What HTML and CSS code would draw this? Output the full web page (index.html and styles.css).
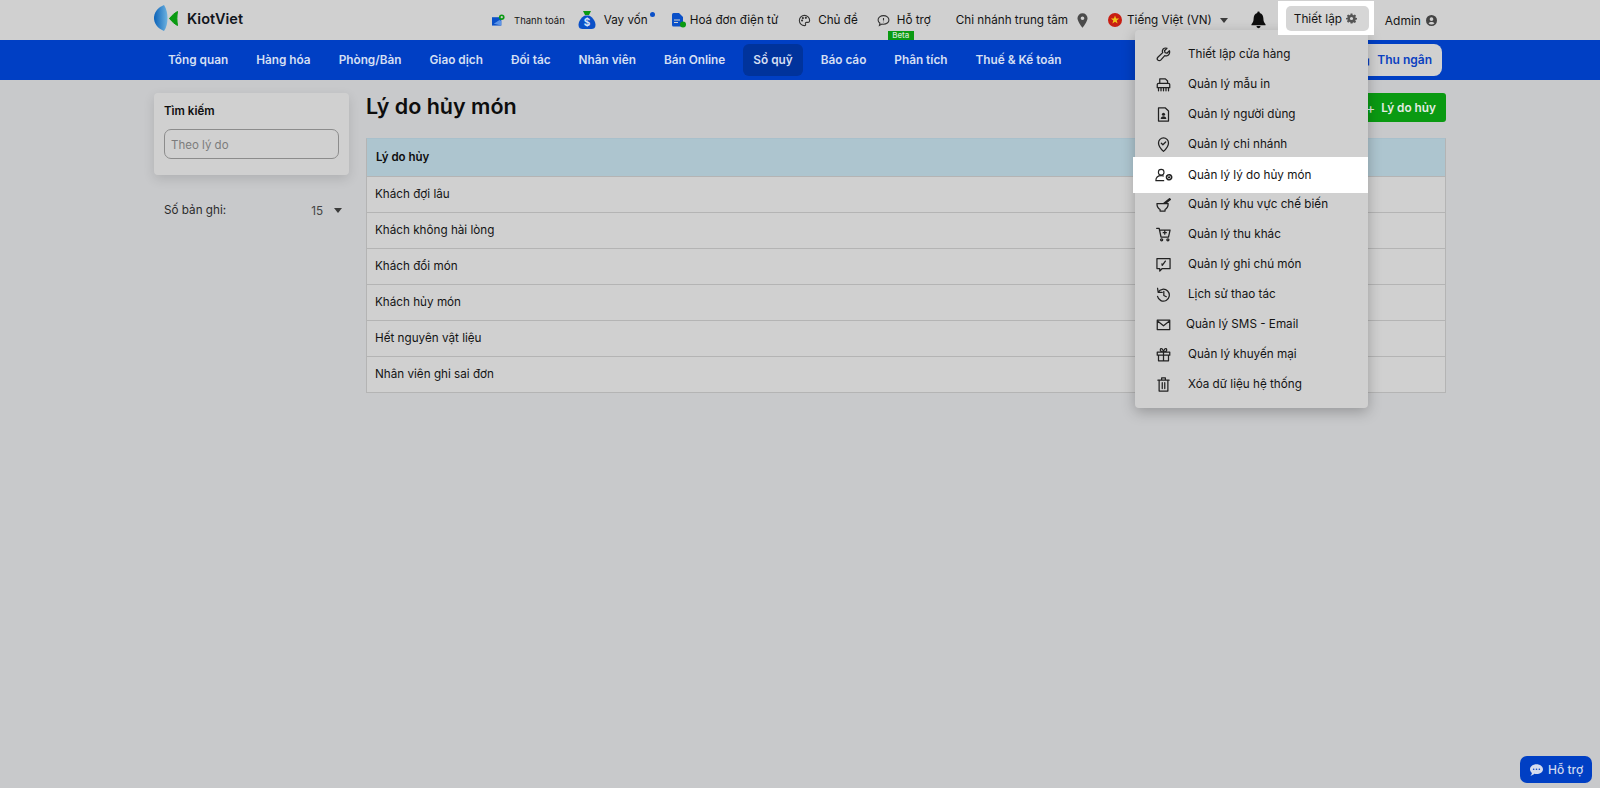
FILE: index.html
```html
<!DOCTYPE html>
<html lang="vi">
<head>
<meta charset="utf-8">
<title>Lý do hủy món</title>
<link rel="stylesheet" href="styles.css">
</head>
<body>
<header class="topbar">
  <div class="logo">
    <svg class="logo-mark" viewBox="0 0 26 28"><defs><linearGradient id="lg" x1="0" x2="1" y1="0" y2="0"><stop offset="0" stop-color="#0b62b8"/><stop offset="1" stop-color="#6db2e0"/></linearGradient></defs><path d="M10 1C3 4 0 9 0 14s3 10 10 13c2.500-3.500 3.500-8.500 3.500-13S12.500 4.500 10 1z" fill="url(#lg)"/><path d="M23.500 7.500c-3 1.500-5.500 4-8 7 2.500 3 5 5.500 8 7-.8-4.500-.8-9.500 0-14z" fill="#0a9a12" stroke="#0a9a12" stroke-linejoin="round"/></svg>
    <span class="logo-text">KiotViet</span>
  </div>
  <div class="top-items">
    <a class="top-item small">
      <svg class="ic-pay" viewBox="0 0 14 12"><path d="M0 3h10v9H0z" fill="#0a50c8"/><path d="M2 10l6-4 2 1v5z" fill="#5d94e6"/><circle cx="10.500" cy="3" r="3" fill="#0a9a12"/><circle cx="10.500" cy="3" r="1.200" fill="#d0d0d0"/></svg>
      <span>Thanh toán</span>
    </a>
    <a class="top-item m-bag">
      <svg class="ic-bag" viewBox="0 0 18 18"><path d="M5 0h8l-2 4H7z" fill="#0a9a12"/><path d="M7 4.500h4c4 2 6.500 6 6.500 9.500 0 3-2 4-4 4h-9c-2 0-4-1-4-4 0-3.500 2.500-7.500 6.500-9.500z" fill="#0a50c8"/><text x="9" y="14.500" class="bag-sign">$</text></svg>
      <span>Vay vốn</span><i class="dot"></i>
    </a>
    <a class="top-item m-inv">
      <svg class="ic-inv" viewBox="0 0 14 15"><path d="M0 1.500Q0 0 1.500 0H7l4 4v9.500H1.500Q0 13.500 0 12z" fill="#0a50c8"/><path d="M2 7h6M2 9.500h4" stroke="#d0d0d0" stroke-width="1"/><circle cx="11" cy="11.500" r="3" fill="#0a9a12"/></svg>
      <span>Hoá đơn điện tử</span>
    </a>
    <a class="top-item m-theme">
      <svg class="ic" viewBox="0 0 24 24"><path d="M12 2.500a9.500 9.500 0 1 0 0 19c2 0 2.500-1.500 1.800-3-.7-1.600.3-3 2-3h3c1.700 0 2.700-1.300 2.700-3.500 0-5.500-4.500-9.500-9.500-9.500z"/><circle cx="7.500" cy="12" r="1"/><circle cx="9" cy="7.500" r="1"/><circle cx="14.500" cy="7" r="1"/></svg>
      <span>Chủ đề</span>
    </a>
    <a class="top-item m-help">
      <svg class="ic" viewBox="0 0 24 24"><path d="M12 3c5.500 0 10 3.500 10 8s-4.500 8-10 8c-1 0-2 0-3-.4L4.500 21l1-4C3.300 15.500 2 13.400 2 11c0-4.500 4.500-8 10-8z"/><path d="M12 7.500v4.500M12 14.500v.5"/></svg>
      <span>Hỗ trợ</span>
      <b class="beta">Beta</b>
    </a>
    <a class="top-item m-branch">
      <span>Chi nhánh trung tâm</span>
      <svg class="ic-pin" viewBox="0 0 12 16"><path fill-rule="evenodd" d="M6 0a5.500 5.500 0 0 1 5.500 5.500C11.500 9 6 16 6 16S.5 9 .5 5.500A5.500 5.500 0 0 1 6 0zm0 3.500a2 2 0 1 0 0 4 2 2 0 0 0 0-4z" fill="#4a4a4a"/></svg>
    </a>
    <a class="top-item m-lang">
      <svg class="ic-flag" viewBox="0 0 14 14"><circle cx="7" cy="7" r="7" fill="#c81e12"/><path d="M7 2.500l1.100 3h3.100l-2.500 1.900.9 3.100L7 8.700l-2.600 1.800.9-3.100-2.500-1.900h3.100z" fill="#f0c419"/></svg>
      <span>Tiếng Việt (VN)</span>
      <i class="caret m-caret"></i>
    </a>
    <a class="bell-link" aria-label="Thông báo">
      <svg class="ic-bell" viewBox="0 0 16 18"><path d="M8 0a1.300 1.300 0 0 1 1.300 1.500C12 2.200 13.200 4.500 13.200 7.500c0 3 .8 4.500 2.300 6v1H.5v-1C2 12 2.800 10.500 2.800 7.500c0-3 1.200-5.300 3.900-6A1.300 1.300 0 0 1 8 0zM5.800 15.500h4.400a2.200 2.200 0 0 1-4.400 0z" fill="#0d0d0d"/></svg>
    </a>
    <div class="settings-frame">
      <a class="settings-btn">
        <span>Thiết lập</span>
        <svg class="ic-gear" viewBox="0 0 24 24"><path fill-rule="evenodd" d="M10 1h4l.6 3.200 1.900.8 2.700-1.800 2.800 2.800-1.800 2.700.8 1.900L24 11v3l-3 .6-.8 1.900 1.800 2.700-2.800 2.800-2.700-1.800-1.900.8L14 23h-4l-.6-3-1.900-.8-2.700 1.800-2.800-2.800 1.800-2.700-.8-1.900L0 14v-3l3-.4.8-1.900L2 6l2.800-2.800 2.700 1.800 1.900-.8zM12 8.500a3.500 3.500 0 1 0 0 7 3.500 3.500 0 0 0 0-7z" fill="#555"/></svg>
      </a>
    </div>
    <a class="top-item m-admin">
      <span>Admin</span>
      <svg class="ic-user" viewBox="0 0 24 24"><path fill-rule="evenodd" d="M12 0a12 12 0 1 1 0 24 12 12 0 0 1 0-24zm0 5a4 4 0 1 0 0 8 4 4 0 0 0 0-8zm0 10c-2.600 0-5 1-6.500 3a9 9 0 0 0 13 0c-1.500-2-3.900-3-6.500-3z" fill="#444"/></svg>
    </a>
  </div>
</header>

<nav class="mainnav">
  <a class="nav-link">Tổng quan</a>
  <a class="nav-link">Hàng hóa</a>
  <a class="nav-link">Phòng/Bàn</a>
  <a class="nav-link">Giao dịch</a>
  <a class="nav-link">Đối tác</a>
  <a class="nav-link">Nhân viên</a>
  <a class="nav-link">Bán Online</a>
  <a class="nav-link active">Sổ quỹ</a>
  <a class="nav-link">Báo cáo</a>
  <a class="nav-link">Phân tích</a>
  <a class="nav-link">Thuế &amp; Kế toán</a>
  <a class="cashier">
    <svg class="ic-cash" viewBox="0 0 14 14"><path d="M1 5h12v9H1z" fill="#0a40c0"/><path d="M5 0h4v4H5z" fill="#0a40c0"/><path d="M6 8h2v4H6z" fill="#d0d0d0"/></svg>
    <span>Thu ngân</span>
  </a>
</nav>

<div class="page">
  <aside class="side">
    <section class="search-card">
      <h3 class="search-title">Tìm kiếm</h3>
      <input class="search-input" type="text" placeholder="Theo lý do">
    </section>
    <div class="page-size">
      <span>Số bản ghi:</span>
      <span class="size-val">15</span>
      <i class="caret"></i>
    </div>
  </aside>
  <main class="content">
    <div class="content-head">
      <h1 class="title">Lý do hủy món</h1>
      <button class="add-btn"><span class="plus">+</span><span>Lý do hủy</span></button>
    </div>
    <div class="table">
      <div class="th">Lý do hủy</div>
      <div class="td">Khách đợi lâu</div>
      <div class="td">Khách không hài lòng</div>
      <div class="td">Khách đổi món</div>
      <div class="td">Khách hủy món</div>
      <div class="td">Hết nguyên vật liệu</div>
      <div class="td">Nhân viên ghi sai đơn</div>
    </div>
  </main>
</div>

<div class="menu">
  <a class="menu-item"><svg class="mi" viewBox="0 0 24 24"><path d="M21.500 6l-4 4-3-1-1-3 4-4c-3-1-6 0-7 3-.5 1.500-.3 3 .2 4L3 16.500a3 3 0 0 0 4.500 4.500L14 13.800c1 .5 2.500.7 4 .2 3-1 4.500-5 3.500-8z"/></svg><span>Thiết lập cửa hàng</span></a>
  <a class="menu-item"><svg class="mi" viewBox="0 0 24 24"><path d="M6 10V3h9l3.500 3.500V10M2 17v-5a2 2 0 0 1 2-2h16a2 2 0 0 1 2 2v5zM4 17v5M8 17v5M12 17v5M16 17v5M20 17v5"/></svg><span>Quản lý mẫu in</span></a>
  <a class="menu-item"><svg class="mi" viewBox="0 0 24 24"><path d="M4 1.500h11l5 5v16H4z"/><circle cx="12" cy="11.500" r="2.500" class="fill"/><path d="M7.500 19c0-5.500 9-5.500 9 0z" class="fill"/></svg><span>Quản lý người dùng</span></a>
  <a class="menu-item"><svg class="mi" viewBox="0 0 24 24"><path d="M12 23S4 15.500 4 9.500a8 8 0 0 1 16 0C20 15.500 12 23 12 23z"/><path d="M8.500 10l2.500 2.500 4.500-4.500"/></svg><span>Quản lý chi nhánh</span></a>
  <a class="menu-item current"><svg class="mi wide" viewBox="0 0 32 24"><circle cx="11" cy="7" r="5"/><path d="M1.500 22c0-6 4-9 9.500-9 2 0 3 .3 4 .8M1.500 22h14"/><circle cx="25" cy="16" r="2" class="fill"/><circle cx="25" cy="16" r="4.500" stroke-dasharray="2.500 1.100" stroke-width="3"/></svg><span>Quản lý lý do hủy món</span></a>
  <a class="menu-item"><svg class="mi" viewBox="0 0 24 24"><path d="M1.500 10.500h18c0 4.500-2 8-5 9.500v2.500h-8V20c-3-1.500-5-5-5-9.500zM12 10.500L22 2.500M15 10.500L23 4"/></svg><span>Quản lý khu vực chế biến</span></a>
  <a class="menu-item"><svg class="mi" viewBox="0 0 24 24"><path d="M1 2h4l3 14h12l2.500-11H6M14 6.500v5M11.500 9h5"/><circle cx="9" cy="20.500" r="1.700"/><circle cx="19" cy="20.500" r="1.700"/></svg><span>Quản lý thu khác</span></a>
  <a class="menu-item"><svg class="mi" viewBox="0 0 24 24"><path d="M1.500 2.500h21v16H10l-4 4v-4H1.500zM15 6.500l-5 7M10 13.500l-.5-2.500"/></svg><span>Quản lý ghi chú món</span></a>
  <a class="menu-item"><svg class="mi" viewBox="0 0 24 24"><path d="M2.500 2l1 6.500H10M3.500 8.500a9.500 9.500 0 1 1-1 6.500M12.500 7v6.500l4 2"/></svg><span>Lịch sử thao tác</span></a>
  <a class="menu-item sms"><svg class="mi" viewBox="0 0 24 24"><path d="M2 5h20v15H2zM2 6l10 8 10-8"/></svg><span>Quản lý SMS - Email</span></a>
  <a class="menu-item"><svg class="mi" viewBox="0 0 24 24"><path d="M2 8h20v5H2zM4 13v9h16v-9M12 8v14M12 8C9 8 6 6 7 3.500S11 3 12 8zM12 8c3 0 6-2 5-4.500S13 3 12 8z"/></svg><span>Quản lý khuyến mại</span></a>
  <a class="menu-item"><svg class="mi" viewBox="0 0 24 24"><path d="M3 5h18M9 5V1.500h6V5M5 5v17.500h14V5M10 9v9.500M14 9v9.500"/></svg><span>Xóa dữ liệu hệ thống</span></a>
</div>

<a class="help-fab">
  <svg class="ic-chat" viewBox="0 0 16 14"><path fill-rule="evenodd" d="M8 0c4.400 0 8 2.700 8 6s-3.600 6-8 6c-.9 0-1.800-.1-2.600-.3C4 13 2.300 14 .5 14c1-.9 1.700-2 1.900-3.400C.9 9.500 0 7.900 0 6c0-3.300 3.600-6 8-6zM4.500 5a1 1 0 1 0 0 2 1 1 0 0 0 0-2zM8 5a1 1 0 1 0 0 2 1 1 0 0 0 0-2zm3.500 0a1 1 0 1 0 0 2 1 1 0 0 0 0-2z" fill="#d4dcee"/></svg>
  <span>Hỗ trợ</span>
</a>
</body>
</html>
```
FILE: styles.css
```css
* { box-sizing: border-box; }
html, body { margin: 0; height: 788px; overflow: hidden; }
body {
  background: #c8c9cb;
  font-family: Inter, "Liberation Sans", sans-serif;
  font-size: 11.7px;
  color: #141414;
  position: relative;
}
a { color: inherit; text-decoration: none; }

/* top bar */
.topbar {
  height: 40px;
  background: #d0d0d0;
  display: flex;
  align-items: center;
  padding-left: 154px;
}
.logo { display: flex; align-items: center; width: 338px; margin-bottom: 4px; }
.logo-mark { width: 26px; height: 28px; display: block; }
.logo-text { margin-left: 7px; font-size: 14.5px; font-weight: 600; color: #10151c; }
.top-items { display: flex; align-items: center; height: 40px; }
.top-item { display: flex; align-items: center; position: relative; white-space: nowrap; font-size: 11.7px; }
.top-item.small { font-size: 9.5px; }
.ic-pay { width: 13px; height: 12px; margin-right: 9px; }
.ic-bag { width: 18px; height: 18px; margin-right: 8px; }
.bag-sign { font-size: 10px; font-weight: 700; fill: #d8e4f8; text-anchor: middle; }
.m-bag { margin-left: 13px; }
.dot { position: absolute; right: -7px; top: 1px; width: 5px; height: 5px; border-radius: 50%; background: #0a50c8; }
.m-inv { margin-left: 24px; }
.ic-inv { width: 14px; height: 15px; margin-right: 4px; }
.m-theme { margin-left: 20px; }
.ic { width: 13px; height: 13px; margin-right: 7px; fill: none; stroke: #333; stroke-width: 2; }
.m-help { margin-left: 19px; height: 40px; }
.beta {
  position: absolute;
  left: 11px;
  top: 31px;
  width: 26px;
  height: 9px;
  background: #0a9a12;
  color: #cfe8d0;
  font-size: 8px;
  font-weight: 500;
  line-height: 9px;
  text-align: center;
}
.m-branch { margin-left: 25px; }
.ic-pin { width: 11px; height: 15px; margin-left: 9px; }
.m-lang { margin-left: 20px; }
.ic-flag { width: 14px; height: 14px; margin-right: 5px; }
.caret {
  display: inline-block;
  width: 0;
  height: 0;
  border-left: 4.500px solid transparent;
  border-right: 4.500px solid transparent;
  border-top: 5px solid #3c3c3c;
}
.m-caret { margin-left: 8px; }
.bell-link { display: flex; margin-left: 23px; }
.ic-bell { width: 15px; height: 18px; }
.settings-frame {
  position: relative;
  z-index: 2;
  margin: 1px 0 0 12px;
  width: 96px;
  height: 34px;
  background: #fff;
  padding: 5px 5px 4px 8px;
  align-self: flex-start;
}
.settings-btn {
  display: flex;
  align-items: center;
  height: 25px;
  padding: 0 0 0 8px;
  background: #d6d6d6;
  border-radius: 5px;
  font-size: 11.8px;
  white-space: nowrap;
}
.ic-gear { width: 11px; height: 11px; margin-left: 4px; }
.m-admin { margin-left: 11px; font-size: 12px; }
.ic-user { width: 11px; height: 11px; margin-left: 5px; }

/* nav */
.mainnav {
  height: 40px;
  background: #003fc4;
  display: flex;
  align-items: center;
  gap: 8px;
  padding: 0 158px 1px 158px;
}
.nav-link {
  height: 32px;
  line-height: 32px;
  padding: 0 10px;
  border-radius: 6px;
  color: #d5dff3;
  font-size: 11.8px;
  font-weight: 600;
  white-space: nowrap;
}
.nav-link.active { background: #00339c; }
.cashier {
  margin-left: auto;
  width: 87px;
  height: 32px;
  background: #d0d0d0;
  border-radius: 0 8px 8px 0;
  display: flex;
  align-items: center;
  justify-content: flex-end;
  padding-right: 10px;
  color: #0a40c0;
  font-size: 12px;
  font-weight: 600;
}
.ic-cash { width: 11px; height: 12px; margin-right: 7px; }

/* page */
.page { display: flex; padding: 13px 154px 0; gap: 17px; }
.side { width: 195px; flex: none; }
.search-card {
  height: 82px;
  background: #d0d0d0;
  border-radius: 4px;
  padding: 11px 10px;
  box-shadow: 0 4px 12px rgba(0, 0, 0, .12);
}
.search-title { margin: 0 0 11px; font-size: 11.500px; line-height: 14px; font-weight: 600; color: #0d0d0d; }
.search-input {
  display: block;
  width: 175px;
  height: 30px;
  background: transparent;
  border: 1px solid #8c8c8c;
  border-radius: 7px;
  padding: 1px 6px 0;
  font: 11.5px Inter, "Liberation Sans", sans-serif;
  outline: 0;
}
.search-input::placeholder { color: #7c7c7c; opacity: 1; }
.page-size { display: flex; align-items: center; margin-top: 28px; padding: 0 7px 0 10px; height: 14px; color: #2c2c2c; }
.size-val { margin-left: auto; margin-right: 11px; color: #444; position: relative; top: 1px; }
.content { flex: 1; min-width: 0; }
.content-head { display: flex; justify-content: space-between; align-items: flex-start; height: 45px; }
.title { margin: 0; font-size: 21.5px; line-height: 27px; font-weight: 600; color: #0d0d0d; }
.add-btn {
  display: flex;
  align-items: center;
  height: 29px;
  width: 86px;
  padding: 0 10px 0 0;
  justify-content: flex-end;
  background: #0a9a12;
  border: 0;
  border-radius: 3px;
  color: #e4ece4;
  font: 600 11.8px Inter, "Liberation Sans", sans-serif;
}
.plus { margin-right: 6px; font-size: 14px; font-weight: 400; }
.table { border: 1px solid #b4b4b4; border-top-color: #a8c0cc; }
.th {
  height: 37px;
  line-height: 36px;
  background: #adc5cf;
  padding: 0 9px;
  font-size: 11.500px;
  font-weight: 600;
  color: #0d0d0d;
}
.td {
  height: 36px;
  line-height: 34px;
  background: #d0d0d0;
  padding: 0 8px;
  border-top: 1px solid #b4b4b4;
}

/* dropdown */
.menu {
  position: absolute;
  z-index: 1;
  left: 1135px;
  top: 30px;
  width: 233px;
  height: 378px;
  background: #d0d0d0;
  border-radius: 4px;
  padding-top: 9px;
  box-shadow: 0 4px 14px rgba(0, 0, 0, .25);
}
.menu-item {
  display: flex;
  align-items: center;
  height: 30px;
  padding-left: 21px;
  white-space: nowrap;
}
.menu-item span { margin-left: 17px; }
.menu-item.current { height: 36px; margin: -2px 0 -4px -2px; padding-left: 22px; background: #fff; position: relative; }
.menu-item.current span { margin-left: 15px; padding-bottom: 1px; }
.menu-item.sms span { margin-left: 15px; }
.mi { width: 15px; height: 15px; flex: none; fill: none; stroke: #222; stroke-width: 2; stroke-linejoin: round; stroke-linecap: round; }
.mi.wide { width: 18px; height: 14px; }
.mi .fill { fill: #222; stroke: none; }

/* help */
.help-fab {
  position: absolute;
  left: 1520px;
  top: 756px;
  width: 72px;
  height: 27px;
  background: #003fc4;
  border-radius: 7px;
  display: flex;
  align-items: center;
  padding-left: 10px;
  color: #cfd9ef;
  font-size: 12px;
  font-weight: 500;
}
.ic-chat { width: 13px; height: 12px; margin-right: 5px; }
```
